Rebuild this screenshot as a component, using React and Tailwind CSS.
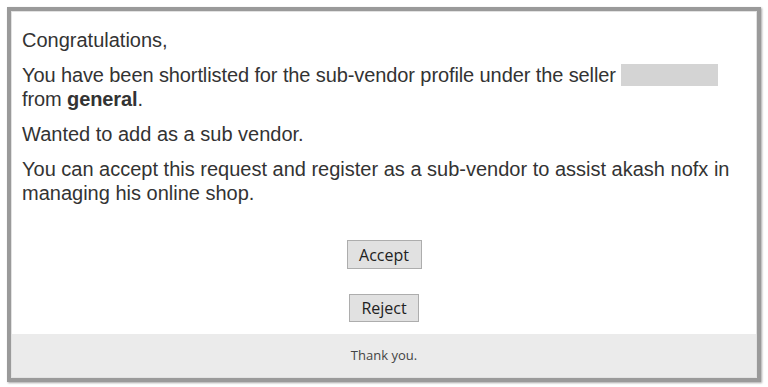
import React from 'react';

export default function App() {
    return (
        <div className="w-[768px] h-[387px] bg-white pt-[7px] pl-[7px]">
            <div className="w-[754px] h-[375px] border-[4px] border-[#9a9a9a] shadow-[1px_1px_2px_rgba(0,0,0,0.35)] flex flex-col">
                <div className="flex-1 bg-white border border-[#e2e2e2] flex flex-col">
                    <div className="px-[10px] pt-[16px] text-[20px] leading-[24px] text-[#333] font-['Liberation_Sans',Arial,sans-serif]">
                        <p>Congratulations,</p>
                        <p className="mt-[11px] tracking-[-0.1px]">
                            You have been shortlisted for the sub-vendor profile under the seller{' '}
                            <span className="inline-block align-middle w-[97px] h-[22px] bg-[#d4d4d4] -mt-[3px]"></span>
                            <br />
                            from <b>general</b>.
                        </p>
                        <p className="mt-[11px]">Wanted to add as a sub vendor.</p>
                        <p className="mt-[11px]">
                            You can accept this request and register as a sub-vendor to assist akash nofx in managing his online shop.
                        </p>
                    </div>

                    <div className="flex flex-col items-center mt-[35px] font-['Open_Sans',sans-serif] text-[16px] text-[#222]">
                        <button className="w-[75px] h-[29px] bg-[#e1e1e1] border border-[#adadad] leading-none">
                            Accept
                        </button>
                        <button className="w-[70px] h-[28px] mt-[25px] bg-[#e1e1e1] border border-[#adadad] leading-none">
                            Reject
                        </button>
                    </div>

                    <div className="mt-auto h-[43px] bg-[#ebebeb] flex items-center justify-center font-['Open_Sans',sans-serif] text-[13px] text-[#444]">
                        Thank you.
                    </div>
                </div>
            </div>
        </div>
    );
}
